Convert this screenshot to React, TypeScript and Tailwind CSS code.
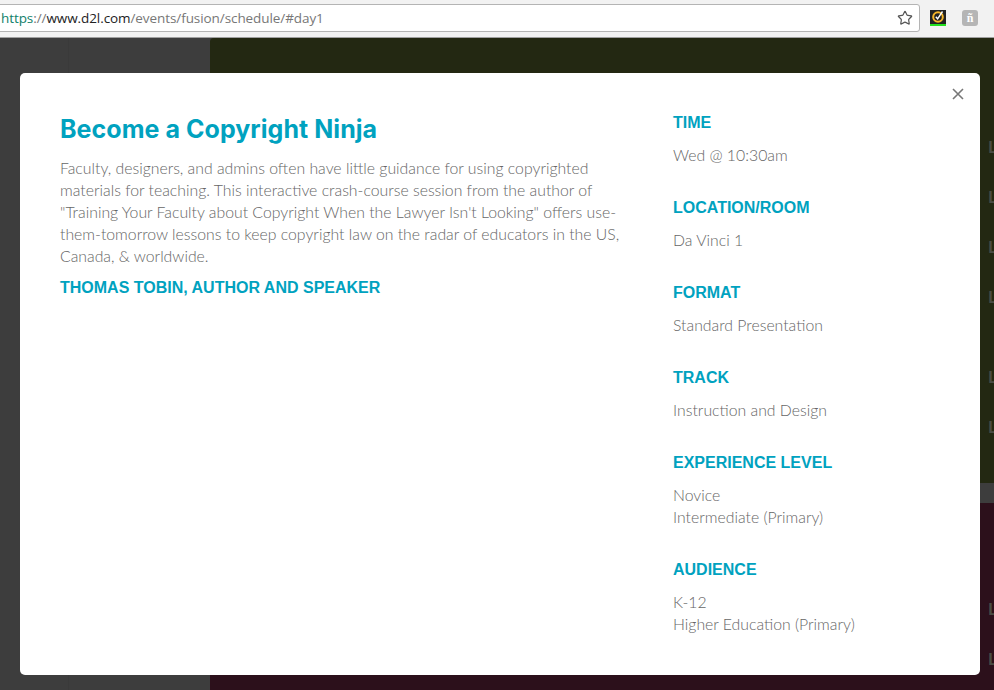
import { Star } from "lucide-react";

function Meta({ title, lines }: { title: string; lines: string[] }) {
  return (
    <div className="mb-[31px]">
      <h3 className="font-['Liberation_Sans',sans-serif] text-[16px] leading-[22px] font-bold text-[#00a2bf]">{title}</h3>
      <div className="mt-[10px] text-[15.8px] leading-[22px] text-[#666666] font-light">
        {lines.map((l) => (
          <div key={l}>{l}</div>
        ))}
      </div>
    </div>
  );
}

function Ghost({ className = "" }: { className?: string }) {
  return <div className={`h-[20px] text-right mr-[-4px] font-['Liberation_Sans',sans-serif] text-[16px] leading-[20px] font-bold text-[#4a4c44] ${className}`}>L</div>;
}

export default function App() {
  return (
    <div className="relative w-[994px] h-[690px] overflow-hidden bg-[#3d3d3d] font-['Lato',sans-serif]">
      {/* Browser toolbar */}
      <div className="h-[38px] bg-[#f2f2f2] border-b border-[#a0a0a0] flex items-start pt-[4px]">
        <div className="ml-[-4px] w-[924px] h-[28px] bg-white border border-[#b4b4b4] rounded-[3px] flex items-center pl-[4px] pr-[6px]">
          <div className="flex-1 font-['Open_Sans',sans-serif] text-[13.5px] tracking-[-0.08px] text-[#777]">
            <span className="text-[#0f7f6a]">https</span>
            <span>://</span>
            <span className="text-[#222]">www.d2l.com</span>
            <span>/events/fusion/schedule/#day1</span>
          </div>
          <Star size={16} strokeWidth={1.8} className="text-[#555]" />
        </div>
        <div className="ml-[10px] mt-[6px] w-[16px] h-[16px] bg-[#222] border-b-2 border-[#22e01f] flex items-center justify-center">
          <svg width="14" height="14" viewBox="0 0 14 14">
            <circle cx="7" cy="7" r="4.8" fill="none" stroke="#f5b52a" strokeWidth="2" />
            <path d="M4.8 6.8 L6.6 8.8 L11.5 1.5" fill="none" stroke="#fff" strokeWidth="1.4" />
          </svg>
        </div>
        <div className="ml-[16px] mt-[6px] w-[16px] h-[16px] rounded-[3px] bg-[#b5b5b5] flex items-center justify-center font-['Liberation_Serif',serif] text-[12px] leading-none font-bold text-white">
          ñ
        </div>
      </div>

      {/* Page behind the modal */}
      <div className="flex h-[652px]">
        <div className="w-[210px] shrink-0 bg-[#3d3d3d]">
          <div className="w-[69px] h-full border-r border-[#3a3a3a]" />
        </div>
        <div className="flex-1 flex flex-col">
          <div className="h-[445px] bg-[#232812] rounded-tl-[4px] pt-[100px]">
            <Ghost className="mb-[30px]" />
            <Ghost className="mb-[30px]" />
            <Ghost className="mb-[30px]" />
            <Ghost className="mb-[60px]" />
            <Ghost className="mb-[30px]" />
            <Ghost />
          </div>
          <div className="h-[20px]" />
          <div className="flex-1 bg-[#2c101b] pt-[97px]">
            <Ghost className="mb-[30px]" />
            <Ghost />
          </div>
        </div>
      </div>

      {/* Modal */}
      <div className="absolute left-[20px] top-[73px] w-[960px] h-[602px] bg-white rounded-[5px] flex">
        <div className="w-[600px] ml-[40px] mt-[39px] shrink-0">
          <h2 className="font-['Inter',sans-serif] text-[25px] leading-[34px] font-bold tracking-[0.05px] text-[#00a2bf]">Become a Copyright Ninja</h2>
          <p className="mt-[11px] w-[565px] text-[15.8px] leading-[22px] text-[#666666] font-light">
            Faculty, designers, and admins often have little guidance for using copyrighted materials for teaching. This interactive crash-course session from the author of "Training Your Faculty about Copyright When the Lawyer Isn't Looking" offers use-them-tomorrow lessons to keep copyright law on the radar of educators in the US, Canada, &amp; worldwide.
          </p>
          <h3 className="mt-[10px] font-['Liberation_Sans',sans-serif] text-[16px] leading-[22px] font-bold text-[#00a2bf]">THOMAS TOBIN, AUTHOR AND SPEAKER</h3>
        </div>
        <div className="ml-[13px] mt-[39px] flex-1">
          <Meta title="TIME" lines={["Wed @ 10:30am"]} />
          <Meta title="LOCATION/ROOM" lines={["Da Vinci 1"]} />
          <Meta title="FORMAT" lines={["Standard Presentation"]} />
          <Meta title="TRACK" lines={["Instruction and Design"]} />
          <Meta title="EXPERIENCE LEVEL" lines={["Novice", "Intermediate (Primary)"]} />
          <Meta title="AUDIENCE" lines={["K-12", "Higher Education (Primary)"]} />
        </div>
        <svg className="absolute right-[16px] top-[15px]" width="12" height="12" viewBox="0 0 12 12">
          <path d="M1 1 L11 11 M11 1 L1 11" stroke="#777" strokeWidth="1.6" />
        </svg>
      </div>
    </div>
  );
}
